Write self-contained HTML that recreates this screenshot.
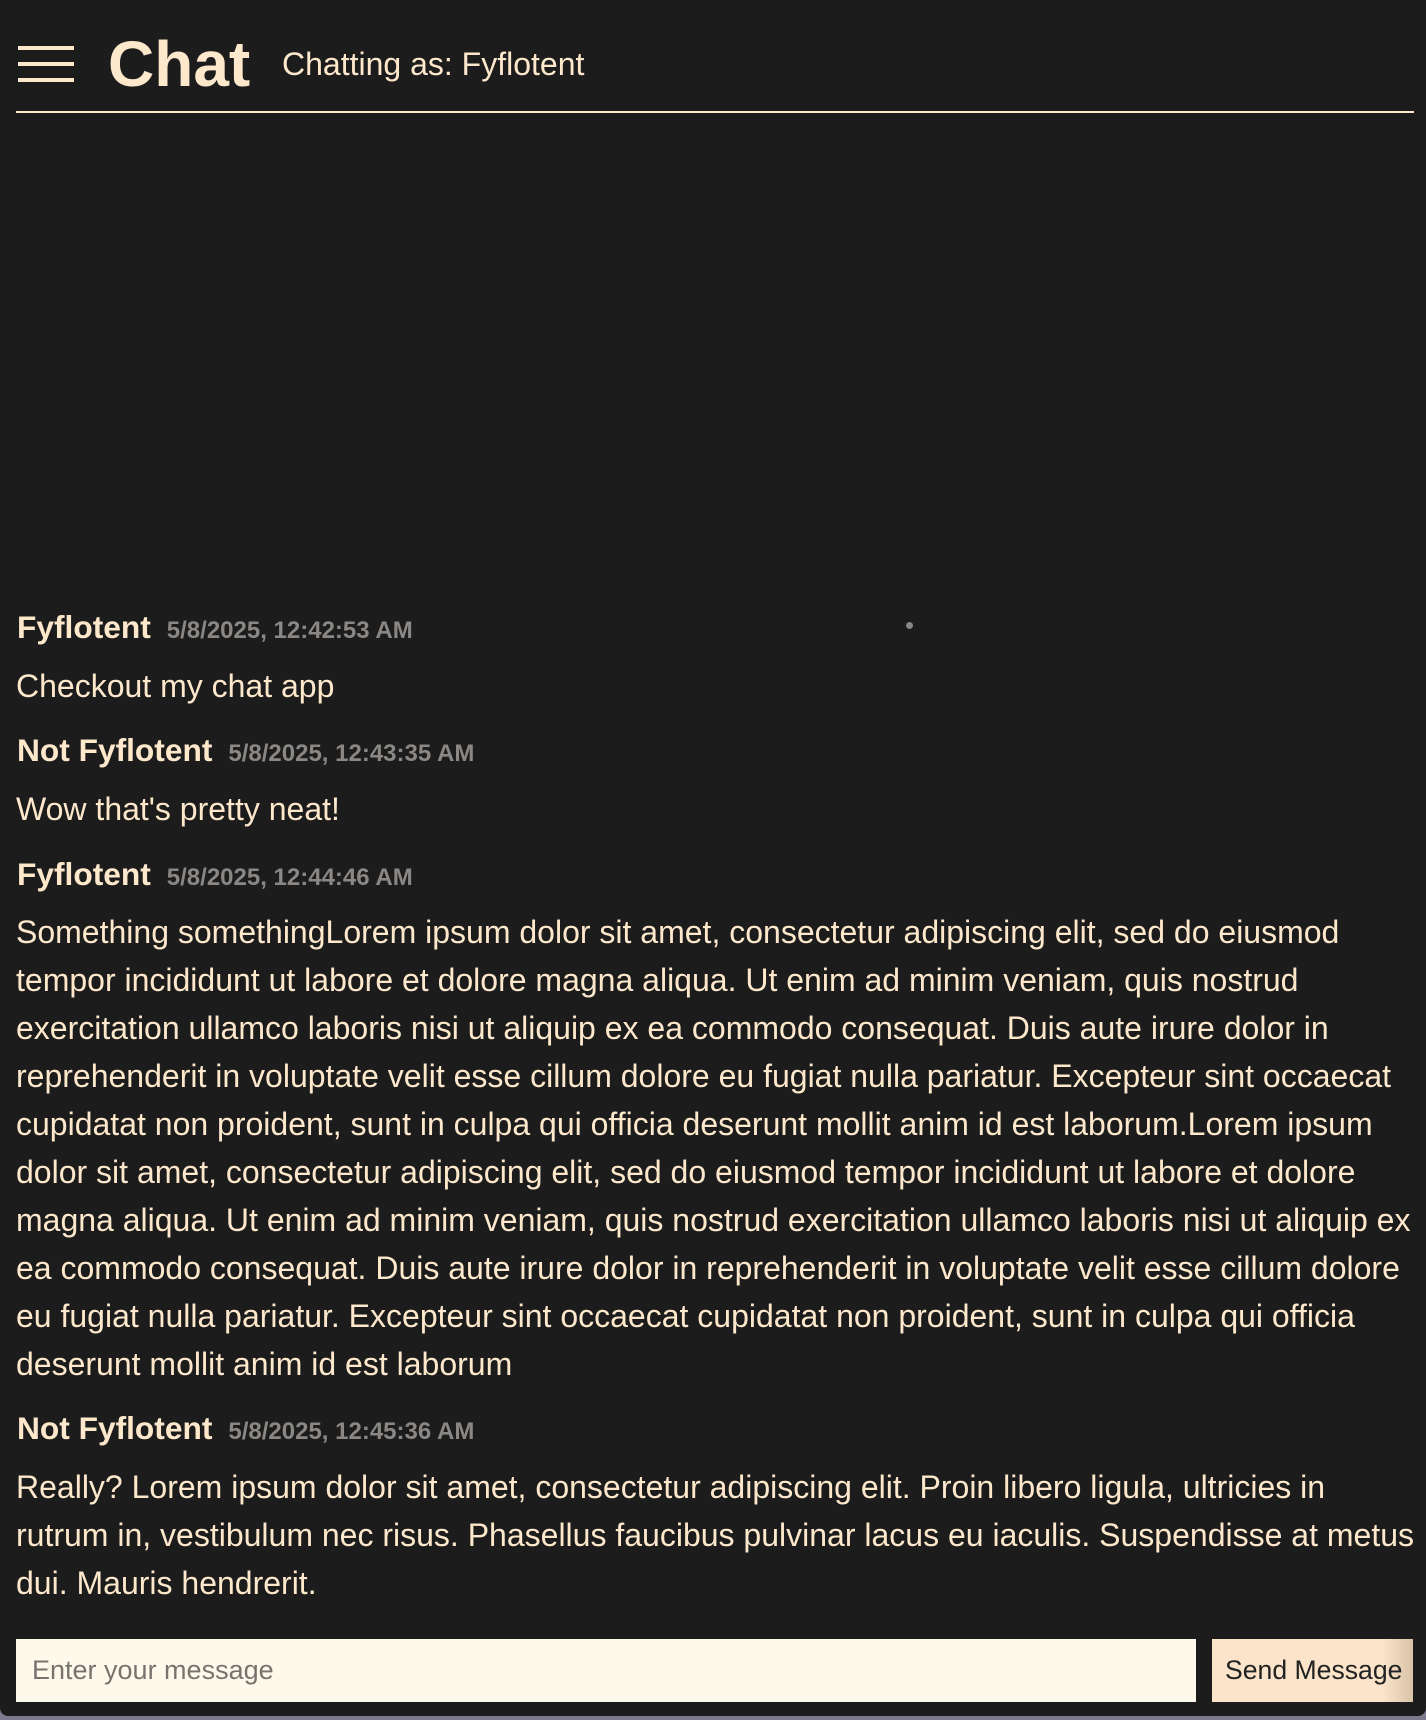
<!DOCTYPE html>
<html><head><meta charset="utf-8"><style>
html,body{margin:0;padding:0;}
body{width:1426px;height:1720px;background:#7d7a90;font-family:"Liberation Sans",Arial,sans-serif;overflow:hidden;position:relative;}
.app{position:absolute;left:0;top:0;width:1426px;height:1716px;background:#1c1c1c;border-radius:0 0 8px 8px;}
.c{color:#fde8cc;}
.ham{position:absolute;left:18px;width:56px;height:4px;background:#fde8cc;}
.name{position:absolute;left:17px;font-weight:bold;font-size:31.7px;line-height:40px;color:#fde8cc;white-space:nowrap;}
.ts{font-size:24px;color:#8a8784;margin-left:16px;}
.body{position:absolute;left:16px;width:1400px;font-size:32px;line-height:48px;color:#fde8cc;}
</style></head><body><div class="app">
<div class="ham" style="top:46px"></div>
<div class="ham" style="top:62px"></div>
<div class="ham" style="top:78px"></div>
<div class="c" style="position:absolute;left:108px;top:26px;font-size:64px;font-weight:bold;line-height:76px;">Chat</div>
<div class="c" style="position:absolute;left:282px;top:44px;font-size:32px;line-height:40px;">Chatting as: Fyflotent</div>
<div style="position:absolute;left:16px;top:111px;width:1398px;height:2px;background:#fde8cc;"></div>
<div style="position:absolute;left:906px;top:622px;width:7px;height:7px;border-radius:50%;background:#8a8784;"></div>

<div class="name" style="top:607px">Fyflotent<span class="ts">5/8/2025, 12:42:53 AM</span></div>
<div class="body" style="top:662px">Checkout my chat app</div>
<div class="name" style="top:730px">Not Fyflotent<span class="ts">5/8/2025, 12:43:35 AM</span></div>
<div class="body" style="top:785px">Wow that's pretty neat!</div>
<div class="name" style="top:854px">Fyflotent<span class="ts">5/8/2025, 12:44:46 AM</span></div>
<div class="body" style="top:908px">Something somethingLorem ipsum dolor sit amet, consectetur adipiscing elit, sed do eiusmod tempor incididunt ut labore et dolore magna aliqua. Ut enim ad minim veniam, quis nostrud exercitation ullamco laboris nisi ut aliquip ex ea commodo consequat. Duis aute irure dolor in reprehenderit in voluptate velit esse cillum dolore eu fugiat nulla pariatur. Excepteur sint occaecat cupidatat non proident, sunt in culpa qui officia deserunt mollit anim id est laborum.Lorem ipsum dolor sit amet, consectetur adipiscing elit, sed do eiusmod tempor incididunt ut labore et dolore magna aliqua. Ut enim ad minim veniam, quis nostrud exercitation ullamco laboris nisi ut aliquip ex ea commodo consequat. Duis aute irure dolor in reprehenderit in voluptate velit esse cillum dolore eu fugiat nulla pariatur. Excepteur sint occaecat cupidatat non proident, sunt in culpa qui officia deserunt mollit anim id est laborum</div>
<div class="name" style="top:1408px">Not Fyflotent<span class="ts">5/8/2025, 12:45:36 AM</span></div>
<div class="body" style="top:1463px">Really? Lorem ipsum dolor sit amet, consectetur adipiscing elit. Proin libero ligula, ultricies in rutrum in, vestibulum nec risus. Phasellus faucibus pulvinar lacus eu iaculis. Suspendisse at metus dui. Mauris hendrerit.</div>

<div style="position:absolute;left:16px;top:1639px;width:1180px;height:63px;background:#fefaeb;"></div>
<div style="position:absolute;left:32px;top:1652px;font-size:27px;line-height:36px;color:#77736e;">Enter your message</div>
<div style="position:absolute;left:1212px;top:1639px;width:201px;height:63px;background:linear-gradient(to right,#fbe4c9 85%,#d9c3a8);"></div>
<div style="position:absolute;left:1225px;top:1652px;font-size:26.6px;line-height:36px;color:#222;">Send Message</div>
</div></body></html>
